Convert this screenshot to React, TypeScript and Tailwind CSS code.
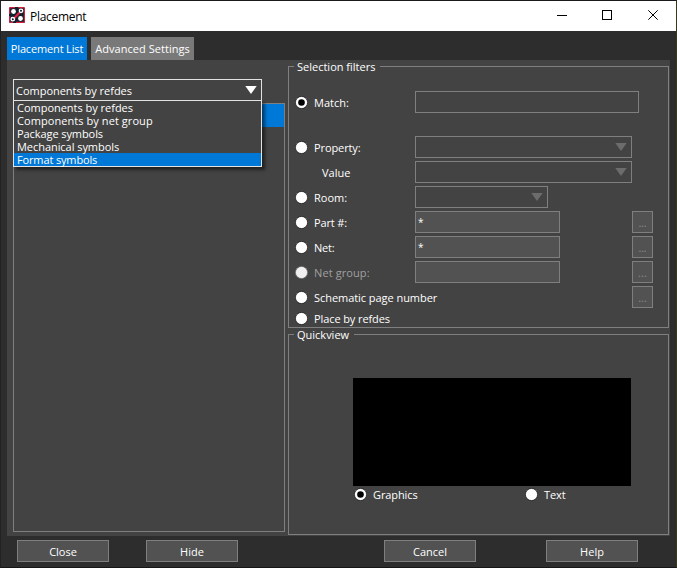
import { useState } from 'react';

const BUTTON = 'border border-[#7f7f7f] bg-[#525252] pt-0.5';

const listOptions = [
  { label: 'Components by refdes', tracking: 'tracking-[-0.02px]' },
  { label: 'Components by net group', tracking: 'tracking-[0.07px]' },
  { label: 'Package symbols', tracking: 'tracking-[-0.08px]' },
  { label: 'Mechanical symbols', tracking: 'tracking-[-0.05px]' },
  { label: 'Format symbols', tracking: 'tracking-[-0.14px]' },
];

type Filter = {
  id: string;
  label: string;
  field?: 'text' | 'select' | 'filled';
  fieldClass?: string;
  rowClass: string;
  value?: string;
  browse?: boolean;
  disabled?: boolean;
  noRadio?: boolean;
};

const filters: Filter[] = [
  { id: 'match', label: 'Match:', field: 'text', fieldClass: 'w-[224px]', rowClass: 'mt-6 h-[22px]' },
  { id: 'property', label: 'Property:', field: 'select', fieldClass: 'w-[217px]', rowClass: 'mt-[23px] h-[22px] tracking-[-0.1px]' },
  { id: 'value', label: 'Value', field: 'select', fieldClass: 'w-[217px]', rowClass: 'mt-[3px] h-[22px]', noRadio: true },
  { id: 'room', label: 'Room:', field: 'select', fieldClass: 'w-[133px]', rowClass: 'mt-[3px] h-[22px]' },
  { id: 'part', label: 'Part #:', field: 'filled', fieldClass: 'w-[145px]', rowClass: 'mt-[3px] h-[22px] tracking-[-0.15px]', value: '*', browse: true },
  { id: 'net', label: 'Net:', field: 'filled', fieldClass: 'w-[145px]', rowClass: 'mt-[3px] h-[22px] tracking-[-0.2px]', value: '*', browse: true },
  { id: 'netgroup', label: 'Net group:', field: 'filled', fieldClass: 'w-[145px]', rowClass: 'mt-[3px] h-[22px] tracking-[0.1px]', browse: true, disabled: true },
  { id: 'page', label: 'Schematic page number', rowClass: 'mt-[3px] h-[22px] tracking-[-0.05px]', browse: true },
  { id: 'refdes', label: 'Place by refdes', rowClass: 'h-[20px] tracking-[-0.1px]' },
];

const Logo = () => (
  <svg width="16" height="16" viewBox="0 0 16 16" className="-mt-0.5">
    <rect width="16" height="16" rx="1.5" fill="#10202e" />
    <path d="M9 0.6H14.2Q15.4 0.6 15.4 1.8V14.2Q15.4 15.4 14.2 15.4H7M0.6 7V1.8Q0.6 0.6 1.8 0.6H6M0.6 9V14.2Q0.6 15.4 1.8 15.4H4" fill="none" stroke="#d0203e" strokeWidth="1.2" />
    <path d="M4.5 12L12 4" stroke="#e0213f" strokeWidth="2.2" />
    <circle cx="4.5" cy="4.5" r="2.4" fill="#fff" />
    <circle cx="11.5" cy="11.5" r="2.4" fill="#fff" />
    <circle cx="12" cy="3.8" r="1.7" fill="#10202e" stroke="#fff" strokeWidth="1.4" />
    <circle cx="3.8" cy="12.2" r="1.7" fill="#10202e" stroke="#fff" strokeWidth="1.4" />
  </svg>
);

const Arrow = ({ color }: { color: string }) => (
  <svg width="12" height="8" viewBox="0 0 12 8">
    <path d="M0.3 0H11.7L6 8z" fill={color} />
  </svg>
);

const Radio = ({ checked, disabled }: { checked?: boolean; disabled?: boolean }) => (
  <svg width="13" height="13" viewBox="0 0 13 13" className="shrink-0">
    <circle cx="6.5" cy="6.5" r="6.1" fill={disabled ? '#f0f0f0' : '#fff'} stroke={disabled ? '#686868' : '#1c1c1c'} strokeWidth="0.8" />
    {checked && <circle cx="6.5" cy="6.5" r="3.3" fill="#000" />}
  </svg>
);

const Legend = ({ children }: { children: string }) => (
  <span className="absolute -top-[7px] left-[5px] bg-[#434343] pr-[5px] pl-[3px] leading-[14px]">{children}</span>
);

export default function App() {
  const [filter, setFilter] = useState('match');
  const [view, setView] = useState('Graphics');
  const [highlighted, setHighlighted] = useState('Format symbols');

  return (
    <div className="h-[568px] w-[677px] border-t border-r border-b border-l border-t-[#1a1a1a] border-r-[#38381f] border-b-[#161616] border-l-[#222222] bg-[#2d2d2d] font-['Open_Sans','Noto_Sans',sans-serif] text-[11px] whitespace-nowrap text-white">
      {/* Title bar */}
      <div className="flex h-[30px] items-center bg-white pl-2 text-[12px] text-black">
        <Logo />
        <span className="ml-[5px] flex-1 pt-0.5 leading-4 tracking-[-0.3px]">Placement</span>
        <svg width="102" height="12" viewBox="0 0 102 12" className="mr-[17px]" fill="none" stroke="#000">
          <path d="M0 5.5H10" />
          <rect x="45.5" y="0.5" width="9" height="9" />
          <path d="M91.3 0.3L100.7 9.7M100.7 0.3L91.3 9.7" />
        </svg>
      </div>

      {/* Tabs */}
      <div className="flex gap-1 pt-1.5 pl-1.5">
        <div className="flex h-[23px] w-20 items-center justify-center bg-[#0078d7] pt-0.5 tracking-[-0.15px]">Placement List</div>
        <div className="flex h-[23px] w-[103px] items-center justify-center bg-[#797979] pt-0.5 tracking-[0.05px]">Advanced Settings</div>
      </div>

      <div className="ml-1.5 flex h-[476px] w-[663px] bg-[#434343] pl-1.5">
        {/* Component list */}
        <div className="relative w-[272px] pt-[19px]">
          <div className="flex h-[22px] w-[249px] items-center justify-between border border-[#e3e3e3] pr-1 pl-0.5">
            <span className="pt-0.5 tracking-[-0.02px]">Components by refdes</span>
            <Arrow color="#fff" />
          </div>
          <div className="mt-0.5 h-[429px] border border-[#7f7f7f]">
            <div className="h-[23px] bg-[#0078d7]" />
          </div>
          <ul className="absolute top-10 left-0 w-[249px] border border-[#e3e3e3] bg-[#434343] shadow-[3px_3px_3px_rgba(0,0,0,0.5)]">
            {listOptions.map(({ label, tracking }) => (
              <li
                key={label}
                onMouseEnter={() => setHighlighted(label)}
                className={`h-[13px] pl-[3px] leading-[13px] ${tracking} ${label === highlighted ? 'bg-[#0078d7]' : ''}`}
              >
                {label}
              </li>
            ))}
          </ul>
        </div>

        <div className="ml-[3px] w-[381px] pt-1.5">
          {/* Selection filters */}
          <div className="relative h-[262px] border border-[#7f7f7f] pt-px">
            <Legend>Selection filters</Legend>
            <div className="-mt-px flow-root">
              {filters.map((item) => (
                <div key={item.id} className={`flex items-center pr-[15px] pl-1.5 ${item.rowClass}`}>
                  <div
                    className={`flex w-[120px] shrink-0 items-center gap-1.5 ${item.noRadio ? 'pl-[27px]' : ''} ${item.disabled ? 'text-[#a0a0a0]' : ''}`}
                    onClick={() => !item.noRadio && !item.disabled && setFilter(item.id)}
                  >
                    {!item.noRadio && <Radio checked={filter === item.id} disabled={item.disabled} />}
                    <span className="pt-0.5">{item.label}</span>
                  </div>
                  {item.field && (
                    <div
                      className={`flex h-[22px] items-center border border-[#7f7f7f] pr-1 pl-0.5 ${item.fieldClass} ${item.field === 'filled' ? 'bg-[#525252]' : ''}`}
                    >
                      <span className="flex-1 text-[10px]">{item.value}</span>
                      {item.field === 'select' && <Arrow color="#6c6c6c" />}
                    </div>
                  )}
                  {item.browse && (
                    <button className={`ml-auto h-[22px] w-[21px] text-[#8a8a8a] ${BUTTON}`}>...</button>
                  )}
                </div>
              ))}
            </div>
          </div>

          {/* Quickview */}
          <div className="relative mt-1.5 h-[201px] border border-[#7f7f7f] pt-[43px] pl-16">
            <Legend>Quickview</Legend>
            <div className="h-[108px] w-[278px] bg-black" />
            <div className="flex pt-0.5 pl-px">
              {['Graphics', 'Text'].map((name) => (
                <div key={name} className="flex h-[13px] w-[171px] shrink-0 items-center gap-1.5" onClick={() => setView(name)}>
                  <Radio checked={view === name} />
                  <span className="pt-0.5 tracking-[-0.1px]">{name}</span>
                </div>
              ))}
            </div>
          </div>
        </div>
      </div>

      {/* Actions */}
      <div className="flex pt-1 pl-4">
        <button className={`h-[22px] w-[92px] ${BUTTON}`}>Close</button>
        <button className={`ml-[37px] h-[22px] w-[92px] ${BUTTON}`}>Hide</button>
        <button className={`ml-[146px] h-[22px] w-[92px] ${BUTTON}`}>Cancel</button>
        <button className={`ml-[70px] h-[22px] w-[92px] ${BUTTON}`}>Help</button>
      </div>
    </div>
  );
}
